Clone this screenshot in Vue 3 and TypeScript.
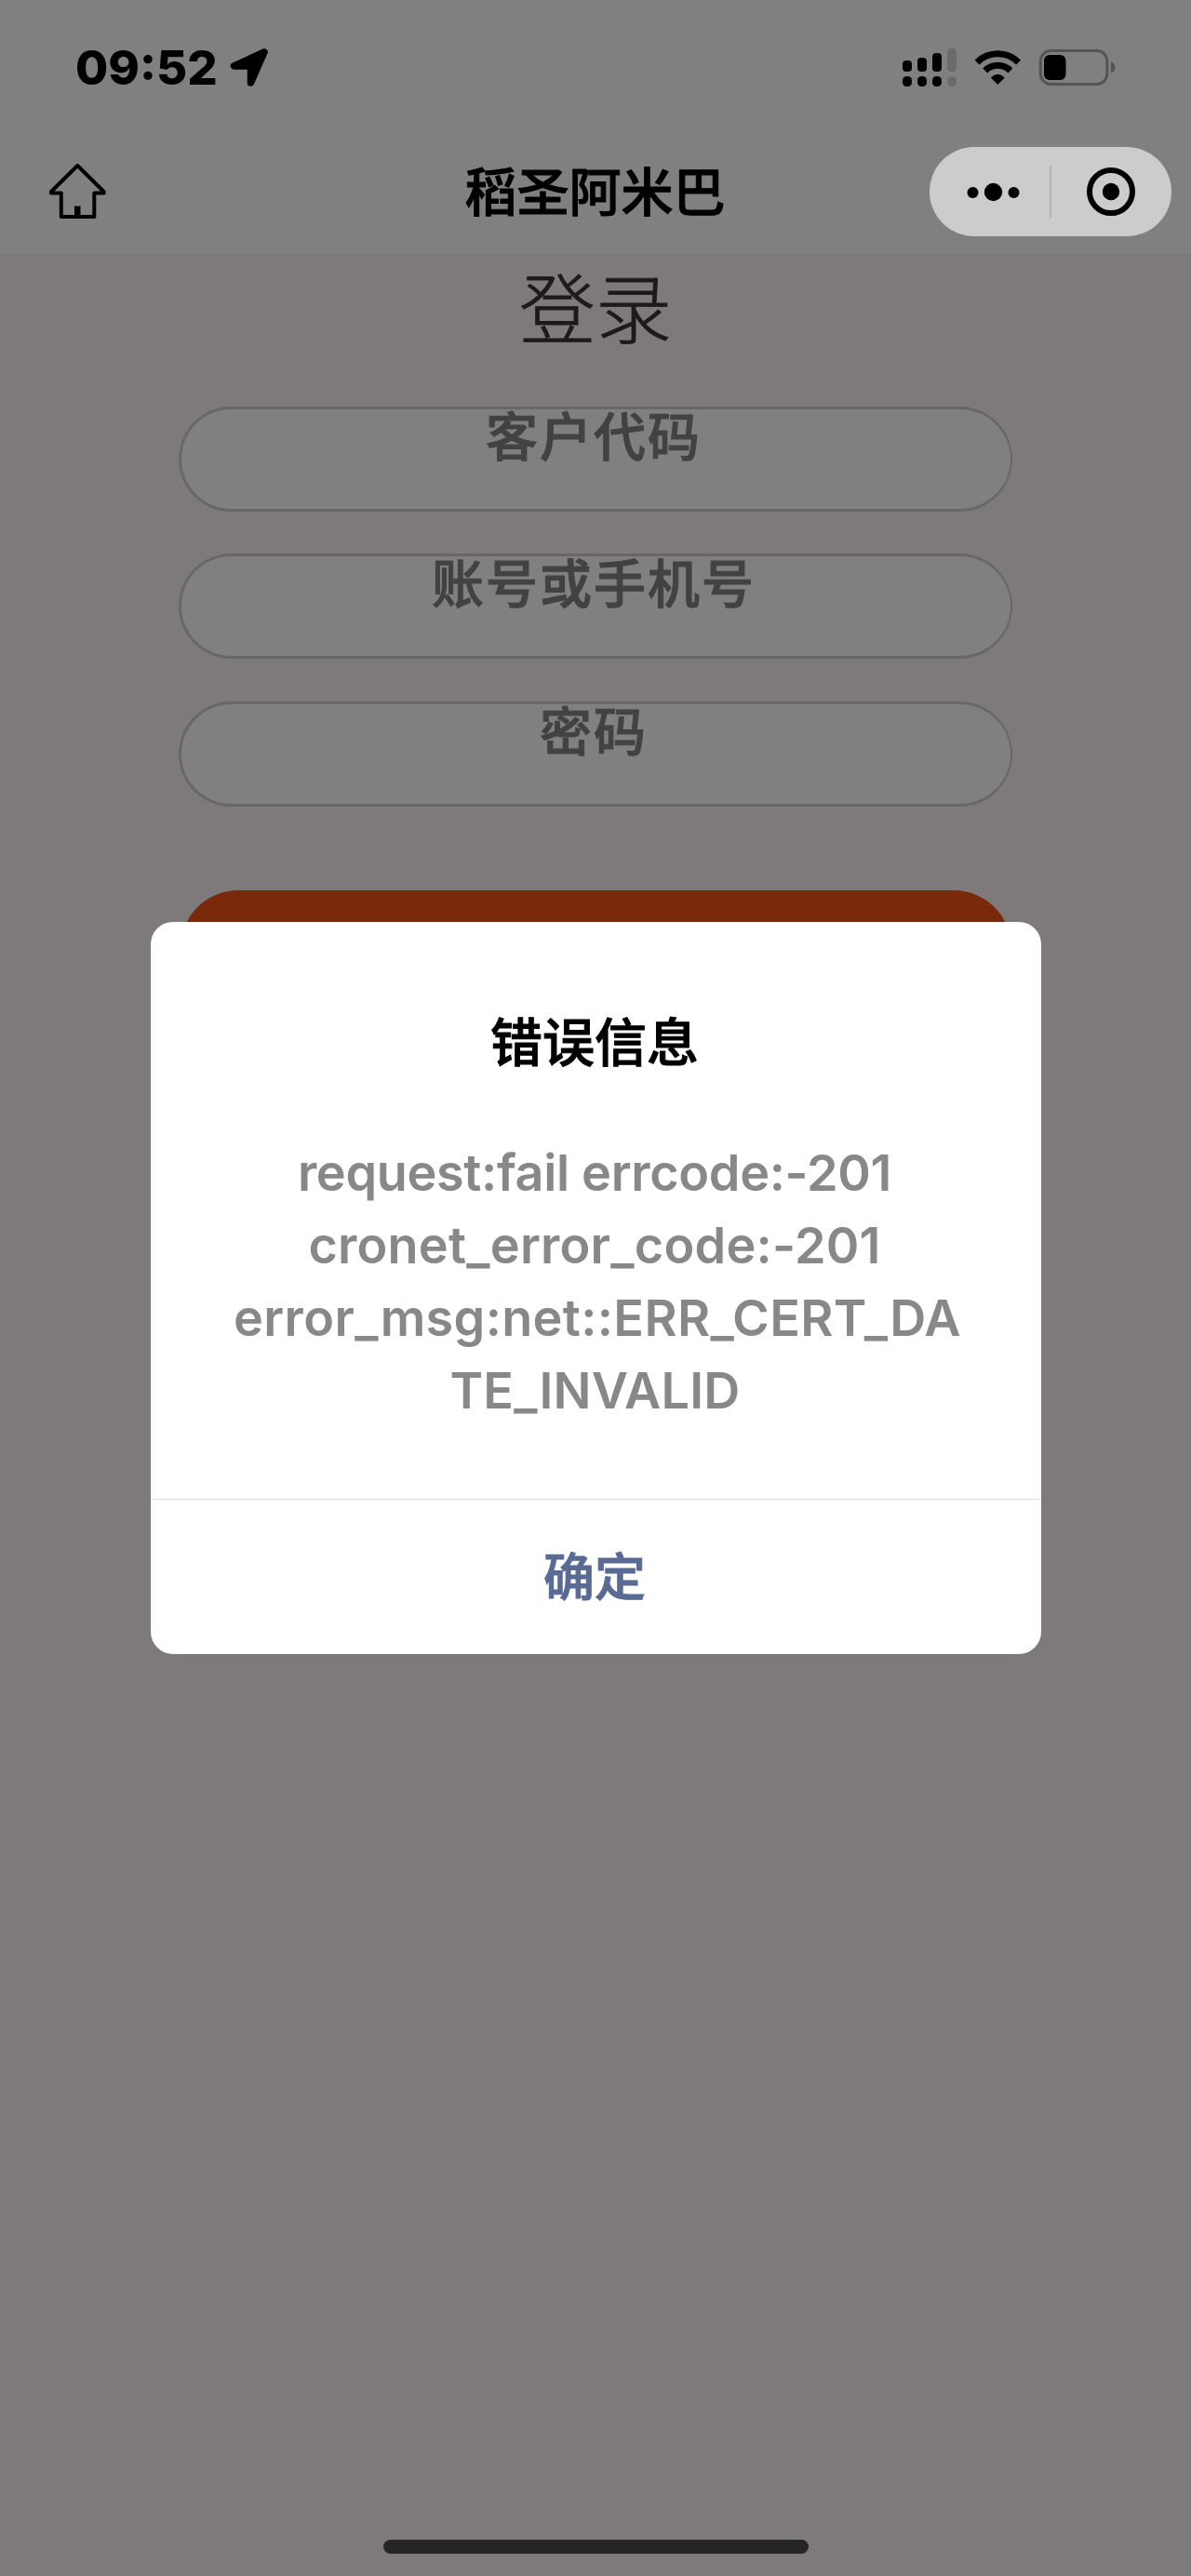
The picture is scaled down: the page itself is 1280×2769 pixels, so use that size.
<script setup lang="ts">
import { ref } from 'vue'

interface Field {
  name: string
  label: string
}

const time = '09:52'
const appName = '稻圣阿米巴'
const fields: Field[] = [
  { name: 'customer', label: '客户代码' },
  { name: 'account', label: '账号或手机号' },
  { name: 'password', label: '密码' },
]
const errorLines: string[] = [
  'request:fail errcode:-201',
  'cronet_error_code:-201',
  'error_msg:net::ERR_CERT_DA',
  'TE_INVALID',
]
const dialogOpen = ref(true)
</script>

<template>
  <div class="screen">
    <header class="header">
      <div class="status">
        <div class="clock">
          <span class="time">{{ time }}</span>
          <svg class="location" width="44" height="44" viewBox="0 0 44 44">
            <path d="M38 5 L5.500 20 H23.500 V38 Z" fill="#000" stroke="#000" stroke-width="7.500" stroke-linejoin="round" />
          </svg>
        </div>
        <svg class="indicators" width="230" height="44" viewBox="0 0 230 44">
          <g fill="#000">
            <rect x="0" y="14" width="10" height="12" rx="4" />
            <rect x="16" y="11" width="10" height="15" rx="4" />
            <rect x="32" y="6" width="10" height="20" rx="4" />
            <rect x="0" y="31" width="10" height="11" rx="4.5" />
            <rect x="16" y="31" width="10" height="11" rx="4.5" />
            <rect x="32" y="31" width="10" height="11" rx="4.5" />
          </g>
          <g fill="#6b6b6b">
            <rect x="48" y="1" width="10" height="25" rx="4" />
            <rect x="48" y="31" width="10" height="11" rx="4.5" />
          </g>
          <g fill="none" stroke="#000" stroke-width="7">
            <path d="M80 16 A31.5 31.5 0 0 1 124.600 16" />
            <path d="M88.800 25 A19 19 0 0 1 115.800 25" />
          </g>
          <path d="M94.800 32.500 Q102.300 25.200 109.800 32.500 L102.300 40 Z" fill="#000" />
          <rect x="148.300" y="3.500" width="71.500" height="36" rx="11" fill="none" stroke="#545454" stroke-width="3" />
          <rect x="152" y="8" width="23.500" height="27" rx="6" fill="#000" />
          <path d="M224 15 Q228.500 17.500 228.500 21.500 Q228.500 25.500 224 27.500 Z" fill="#545454" />
        </svg>
      </div>
      <nav class="nav">
        <svg class="home" width="66" height="66" viewBox="0 0 66 66" fill="none" stroke="#000" stroke-width="4" stroke-linejoin="round">
          <path d="M33.300 5 L5 33 V34.500 H15.800 V60 H51.300 V34.500 H61.600 V33 Z" />
          <rect x="30" y="48.500" width="6.500" height="12" fill="#000" stroke="none" />
        </svg>
        <h1 class="app-name">{{ appName }}</h1>
        <div class="capsule">
          <svg width="260" height="96" viewBox="0 0 260 96">
            <circle cx="46.500" cy="49" r="6" />
            <circle cx="68.500" cy="48.500" r="9.700" />
            <circle cx="90.500" cy="49" r="6" />
            <rect x="129" y="20" width="2" height="56" fill="#b5b5b5" />
            <circle cx="195" cy="48" r="23" fill="none" stroke="#000" stroke-width="6" />
            <circle cx="195" cy="48" r="9.200" />
          </svg>
        </div>
      </nav>
    </header>

    <main class="page">
      <h2 class="heading">登录</h2>
      <form class="form">
        <div v-for="field in fields" :key="field.name" class="field">{{ field.label }}</div>
        <div class="submit"></div>
      </form>
    </main>

    <div class="home-bar"></div>

    <section v-if="dialogOpen" class="dialog" role="alertdialog">
      <h3 class="dialog-title">错误信息</h3>
      <div class="message">
        <div v-for="(line, i) in errorLines" :key="i" :class="'line line-' + i">{{ line }}</div>
      </div>
      <div class="confirm" @click="dialogOpen = false">确定</div>
    </section>
  </div>
</template>

<style>
body {
  margin: 0;
  background: #7e7a7b;
}
</style>

<style scoped>
.screen {
  position: relative;
  display: flex;
  flex-direction: column;
  box-sizing: border-box;
  width: 1280px;
  height: 2769px;
  overflow: hidden;
  background: #7e7a7b;
  font-family: Inter, "Noto Sans CJK SC", sans-serif;
}
h1, h2, h3 {
  margin: 0;
}
svg {
  display: block;
}
.header {
  height: 273px;
  background: #808080;
}
.status {
  display: flex;
  justify-content: space-between;
  align-items: center;
  height: 146px;
  padding: 0 80px 0 80px;
  box-sizing: border-box;
}
.clock {
  display: flex;
  align-items: center;
  gap: 10px;
}
.time {
  width: 155px;
  padding-left: 1px;
  font-size: 51px;
  line-height: 60px;
  font-weight: 800;
  white-space: nowrap;
}
.nav {
  display: grid;
  grid-template-columns: 1fr auto 1fr;
  align-items: center;
  height: 120px;
  padding: 0 21px;
}
.home {
  margin-left: 29px;
}
.app-name {
  padding: 0 1px 6px 0;
  font-family: "Noto Sans CJK SC", sans-serif;
  font-size: 56px;
  line-height: 80px;
  font-weight: 500;
  -webkit-text-stroke: 1px #000;
}
.capsule {
  justify-self: end;
  width: 260px;
  height: 96px;
  border-radius: 48px;
  background: #ccc;
}
.page {
  flex: 1;
}
.heading {
  height: 164px;
  font-family: "Noto Sans CJK SC", sans-serif;
  font-size: 82px;
  line-height: 110px;
  font-weight: 300;
  text-align: center;
  color: #1c1a1b;
  -webkit-text-stroke: 0.8px #1c1a1b;
}
.form {
  display: flex;
  flex-direction: column;
  gap: 45.300px;
  width: 896px;
  margin: 0 auto;
}
.field {
  box-sizing: border-box;
  width: 896px;
  height: 113px;
  border: 3px solid #686767;
  border-right-width: 2px;
  border-radius: 57px;
  background: #808080;
  padding-right: 5px;
  font-family: "Noto Sans CJK SC", sans-serif;
  font-size: 56px;
  line-height: 51px;
  font-weight: 500;
  letter-spacing: 2px;
  text-align: center;
  color: #424242;
  -webkit-text-stroke: 1px #424242;
}
.submit {
  width: 893px;
  height: 124px;
  margin: 45px auto 0;
  border-radius: 62px;
  background: #7a290b;
}
.home-bar {
  width: 457px;
  height: 15px;
  margin: 0 auto 24px;
  border-radius: 8px;
  background: #262424;
}
.dialog {
  position: absolute;
  left: 161.500px;
  top: 990.500px;
  width: 957px;
  height: 787px;
  box-sizing: border-box;
  display: flex;
  flex-direction: column;
  border-radius: 24px;
  background: #fff;
  text-align: center;
}
.dialog-title {
  margin-top: 86px;
  padding-right: 2px;
  font-family: "Noto Sans CJK SC", sans-serif;
  font-size: 56px;
  line-height: 80px;
  font-weight: 500;
  color: #000;
  -webkit-text-stroke: 1px #000;
}
.message {
  margin-top: 65px;
  padding-right: 2px;
  color: #888;
  font-size: 54px;
  line-height: 78.200px;
  font-weight: 600;
}
.line {
  white-space: nowrap;
}
.line-0 {
  letter-spacing: -0.350px;
}
.line-1 {
  letter-spacing: 0.200px;
}
.line-2 {
  padding-left: 6px;
  letter-spacing: 0.330px;
}
.line-3 {
  padding-left: 1px;
  letter-spacing: 0.150px;
}
.confirm {
  margin-top: auto;
  height: 166px;
  border-top: 1px solid #dedede;
  padding-right: 2px;
  font-family: "Noto Sans CJK SC", sans-serif;
  font-size: 55px;
  line-height: 159px;
  font-weight: 500;
  color: #596a94;
  -webkit-text-stroke: 1px #596a94;
}
</style>
